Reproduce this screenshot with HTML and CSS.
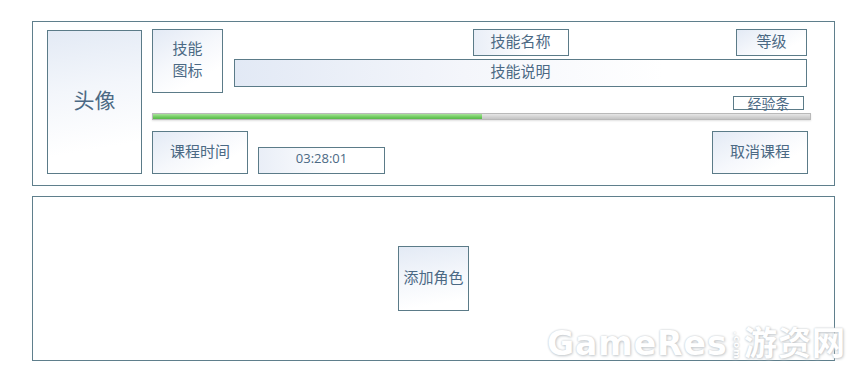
FILE: index.html
```html
<!DOCTYPE html>
<html lang="zh-CN">
<head>
    <meta charset="UTF-8">
    <meta name="viewport" content="width=device-width, initial-scale=1.0">
    <title>课程</title>
    <link rel="stylesheet" href="styles.css">
</head>
<body>
    <div class="page">
        <div class="panel role-panel">
            <div class="box avatar">头像</div>
            <div class="role-main">
                <div class="skill-row">
                    <div class="box skill-icon">技能<br>图标</div>
                    <div class="skill-info">
                        <div class="skill-head">
                            <div class="box skill-name">技能名称</div>
                            <div class="box skill-level">等级</div>
                        </div>
                        <div class="box skill-desc">技能说明</div>
                    </div>
                </div>
                <div class="box exp-label">经验条</div>
                <div class="exp-bar">
                    <div class="exp-fill" style="width: 50%"></div>
                </div>
                <div class="course-row">
                    <div class="box course-time">课程时间</div>
                    <div class="box time-value">03:28:01</div>
                    <div class="box cancel-btn">取消课程</div>
                </div>
            </div>
        </div>

        <div class="panel add-panel">
            <div class="box add-role">添加角色</div>
        </div>

        <div class="watermark">GameRes<span class="dot-com">.com</span>游资网</div>
    </div>
</body>
</html>
```

FILE: styles.css
```css
body {
    margin: 0;
    padding: 21px 0 0 32px;
    background: #fff;
    font-family: "Noto Sans CJK SC", "Noto Sans", sans-serif;
    color: #4b6984;
}
.page {
    position: relative;
    width: 803px;
    display: flex;
    flex-direction: column;
    gap: 10px;
}
.panel {
    box-sizing: border-box;
    border: 1px solid #5f7f8c;
    height: 165px;
}
.box {
    box-sizing: border-box;
    border: 1px solid #5b7b88;
    background: linear-gradient(150deg, #e3eaf5 0%, #f6f8fc 45%, #fff 75%);
    display: flex;
    align-items: center;
    justify-content: center;
    padding-bottom: 4px;
    font-size: 15px;
    line-height: 1.45;
    text-align: center;
}
.role-panel {
    display: flex;
    gap: 10px;
    padding: 8px 23px 0 14px;
}
.avatar {
    width: 95px;
    height: 144px;
    padding-bottom: 6px;
    font-size: 21px;
    background: linear-gradient(170deg, #e3eaf5 0%, #f3f6fb 40%, #fff 80%);
}
.role-main {
    width: 659px;
    display: flex;
    flex-direction: column;
}
.skill-row {
    display: flex;
    gap: 11px;
    margin-top: -1px;
}
.skill-icon {
    width: 71px;
    height: 64px;
}
.skill-info {
    flex: 1;
    margin-right: 4px;
    display: flex;
    flex-direction: column;
    gap: 3px;
}
.skill-head {
    display: grid;
    grid-template-columns: 1fr auto 1fr;
}
.skill-name {
    grid-column: 2;
    width: 96px;
    height: 27px;
    background: linear-gradient(90deg, #e9eef7 0%, #fff 60%);
}
.skill-level {
    grid-column: 3;
    justify-self: end;
    width: 71px;
    height: 27px;
}
.skill-desc {
    height: 28px;
    background: linear-gradient(90deg, #e2e9f5 0%, #f4f6fb 40%, #fff 75%);
}
.exp-label {
    align-self: flex-end;
    margin: 3px 7px 0 0;
    width: 71px;
    height: 14px;
    padding: 0;
    font-size: 14px;
    line-height: 12px;
    align-items: flex-start;
    background: #fff;
}
.exp-bar {
    margin-top: 3px;
    height: 7px;
    box-sizing: border-box;
    border: 1px solid #b9b9b9;
    background: linear-gradient(180deg, #e6e6e6, #c4c4c4);
    box-shadow: 0 1px 2px rgba(0, 0, 0, 0.12);
}
.exp-fill {
    height: 100%;
    background: linear-gradient(180deg, #a8e39a 0%, #6fcb5e 60%, #58b84a 100%);
}
.course-row {
    margin-top: 11px;
    display: flex;
    align-items: flex-end;
    gap: 10px;
}
.course-time {
    width: 96px;
    height: 43px;
}
.time-value {
    width: 127px;
    height: 27px;
    font-size: 13px;
    font-family: "Open Sans", "Noto Sans CJK SC", sans-serif;
    background: linear-gradient(90deg, #e9eef7 0%, #fff 60%);
}
.cancel-btn {
    margin-left: auto;
    margin-right: 3px;
    width: 96px;
    height: 43px;
}
.add-panel {
    display: flex;
    align-items: center;
    justify-content: center;
}
.add-role {
    width: 71px;
    height: 65px;
    background: linear-gradient(170deg, #e3eaf5 0%, #f3f6fb 45%, #fff 85%);
}
.watermark {
    position: absolute;
    left: 515px;
    top: 303px;
    line-height: 40px;
    font-family: "DejaVu Sans", "Noto Sans CJK SC", sans-serif;
    font-weight: bold;
    font-size: 33px;
    letter-spacing: 1px;
    color: #fff;
    text-shadow: 0 0 2px #bfc4c8, 1px 1px 3px #c8cdd1;
    white-space: nowrap;
}
.dot-com {
    display: inline-block;
    font-size: 9px;
    line-height: 9px;
    transform: rotate(90deg);
    vertical-align: middle;
    margin: 0 -6px;
}
```
